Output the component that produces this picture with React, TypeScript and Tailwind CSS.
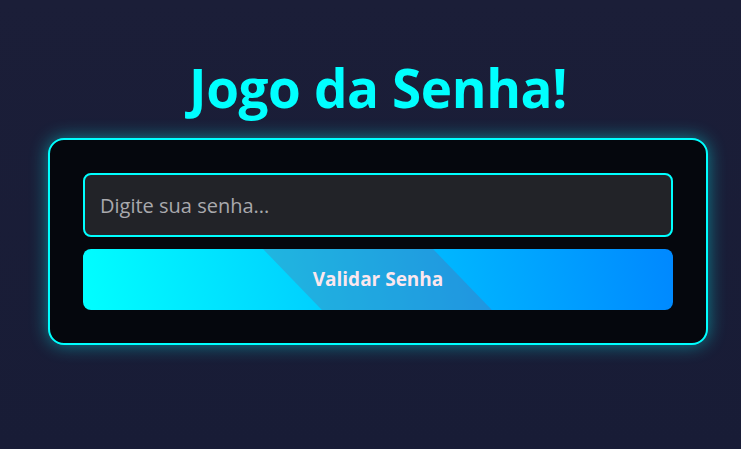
export default function App() {
  return (
    <div className="min-h-[449px] w-full bg-[linear-gradient(180deg,#1b1e38,#181c36)] pl-[15px] font-['Open_Sans',sans-serif]">
      <div className="flex flex-col items-center pt-[52px]">
        <h1 className="text-[53px] font-bold leading-[72px] tracking-[-0.4px] text-[#00ffff]">
          Jogo da Senha!
        </h1>
        <div className="mt-[14px] w-[660px] rounded-[16px] border-2 border-[#00ffff] bg-[#05070d] p-[33px] shadow-[0_0_18px_rgba(0,255,255,0.45)]">
          <input
            type="password"
            placeholder="Digite sua senha..."
            className="h-[64px] w-full rounded-[8px] border-2 border-[#00ffff] bg-[#222328] px-[15px] text-[20px] text-white outline-none placeholder:text-[#a9a9ad]"
          />
          <button className="relative mt-[12px] flex h-[61px] w-full items-center justify-center overflow-hidden rounded-[8px] bg-[linear-gradient(80deg,#00ffff,#0088ff)]">
            <span className="absolute top-0 bottom-0 left-[180px] w-[170px] origin-top-left skew-x-[44deg] bg-[rgba(128,76,132,0.25)]" />
            <span className="relative text-[19px] font-bold text-[#fbe7ee]">Validar Senha</span>
          </button>
        </div>
      </div>
    </div>
  );
}
